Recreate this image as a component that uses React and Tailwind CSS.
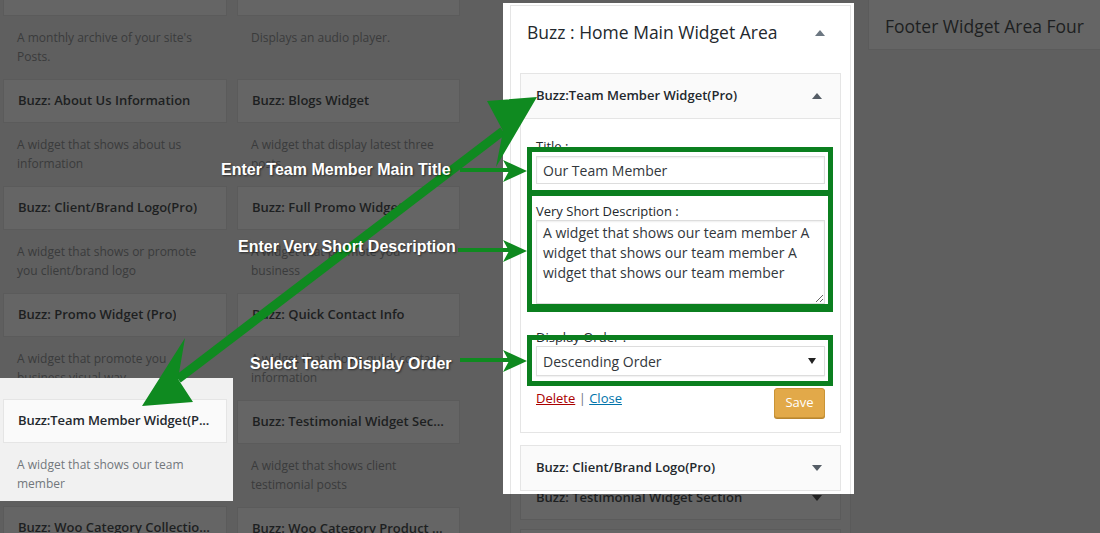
import React from "react";

const TriUp = ({ color = "#555d66" }) => (
  <svg width="10" height="6" viewBox="0 0 10 6">
    <polygon points="0,6 5,0 10,6" fill={color} />
  </svg>
);

const TriDown = ({ color = "#555d66" }) => (
  <svg width="10" height="6" viewBox="0 0 10 6">
    <polygon points="0,0 10,0 5,6" fill={color} />
  </svg>
);

const DimRow = ({ title, desc, h = "h-[63px]" }) => (
  <div>
    <div className="h-[44px] border border-[#5b5b5b] bg-[#656565] flex items-center px-[14px]">
      <div className="truncate text-[13px] font-semibold text-[#1d1f21]">{title}</div>
    </div>
    <div className={`${h} overflow-hidden px-[14px] pt-[12px] text-[12px] leading-[19px] text-[#3a3b3c]`}>
      {desc}
    </div>
  </div>
);

const colOne = [
  { title: "Archives", desc: "A monthly archive of your site's Posts." },
  { title: "Buzz: About Us Information", desc: "A widget that shows about us information" },
  { title: "Buzz: Client/Brand Logo(Pro)", desc: "A widget that shows or promote you client/brand logo" },
];

const colTwo = [
  { title: "Audio", desc: "Displays an audio player." },
  { title: "Buzz: Blogs Widget", desc: "A widget that display latest three posts" },
  { title: "Buzz: Full Promo Widget", desc: "A widget that promote you business" },
  { title: "Buzz: Quick Contact Info", desc: "A widget that shows quick contact information" },
  { title: "Buzz: Testimonial Widget Section", desc: "A widget that shows client testimonial posts" },
  { title: "Buzz: Woo Category Product Widget", desc: "" },
];

const Note = ({ className, children }) => (
  <div
    className={`absolute font-['Liberation_Sans',Arial,sans-serif] font-bold text-[16px] leading-[20px] text-white whitespace-nowrap [text-shadow:1px_1px_2px_rgba(0,0,0,0.55)] ${className}`}
  >
    {children}
  </div>
);

const App = () => {
  return (
    <div className="relative w-[1100px] h-[533px] overflow-hidden bg-[#5f5f5f] font-['Open_Sans',sans-serif]">
      <div className="flex items-start">
        {/* available widgets */}
        <div className="shrink-0 flex gap-[10px] pl-[3px] mt-[-28px]">
          <div className="w-[224px] flex flex-col">
            {colOne.map((w) => (
              <DimRow key={w.title} title={w.title} desc={w.desc} />
            ))}
            <DimRow title="Buzz: Promo Widget (Pro)" desc="A widget that promote you business visual way" h="h-[41px]" />
            <div className="-ml-[3px] w-[233px] pl-[3px] pr-[6px] pt-[21px] bg-[#f1f1f1]">
              <div className="h-[44px] border border-[#e5e5e5] bg-[#fafafa] flex items-center px-[14px]">
                <div className="whitespace-nowrap text-[13px] font-semibold tracking-[-0.1px] text-[#23282d]">Buzz:Team Member Widget(P...</div>
              </div>
              <div className="h-[58px] px-[14px] pt-[12px] text-[12px] leading-[19px] text-[#72777c]">
                A widget that shows our team member
              </div>
            </div>
            <div className="mt-[5px]">
              <DimRow title="Buzz: Woo Category Collection Widget" desc="" />
            </div>
          </div>
          <div className="w-[223px] flex flex-col">
            {colTwo.map((w) => (
              <DimRow key={w.title} title={w.title} desc={w.desc} />
            ))}
          </div>
        </div>

        {/* sidebar: home main widget area */}
        <div className="shrink-0 ml-[43px] w-[351px] flex flex-col">
          <div className="mt-[3px] h-[491px] overflow-hidden bg-white pl-[7px] pr-[3px] pt-[2px]">
            <div className="border border-[#e5e5e5] h-[600px]">
              <div className="h-[53px] flex items-center justify-between pl-[16px] pr-[25px]">
                <span className="text-[17.5px] text-[#23282d]">Buzz : Home Main Widget Area</span>
                <TriUp color="#6c7781" />
              </div>
              <div className="px-[9px] mt-[14px] flex flex-col">
                <div className="border border-[#e5e5e5]">
                  <div className="h-[45px] border-b border-[#e5e5e5] bg-[#fafafa] flex items-center justify-between pl-[15px] pr-[18px]">
                    <span className="text-[13px] font-semibold text-[#23282d]">Buzz:Team Member Widget(Pro)</span>
                    <TriUp />
                  </div>
                  <div className="px-[15px] pt-[18px] pb-[14px] flex flex-col">
                    <label className="text-[13px] leading-[18px] text-[#23282d]">Title :</label>
                    <input
                      readOnly
                      value="Our Team Member"
                      className="mt-[1px] h-[28px] w-full border border-[#dddddd] px-[6px] text-[14px] text-[#32373c] shadow-[inset_0_1px_2px_rgba(0,0,0,0.07)] outline-none"
                    />
                    <label className="mt-[18px] text-[13px] leading-[18px] text-[#23282d]">Very Short Description :</label>
                    <textarea
                      readOnly
                      defaultValue="A widget that shows our team member A widget that shows our team member A widget that shows our team member"
                      className="h-[84px] w-full border border-[#dddddd] px-[6px] pt-[2px] text-[14px] leading-[20px] text-[#32373c] shadow-[inset_0_1px_2px_rgba(0,0,0,0.07)] outline-none"
                    />
                    <label className="mt-[24px] text-[13px] leading-[18px] text-[#23282d]">Display Order :</label>
                    <div className="h-[30px] border border-[#dddddd] flex items-center justify-between pl-[6px] pr-[8px] shadow-[0_1px_1px_rgba(0,0,0,0.05)]">
                      <span className="text-[14px] text-[#32373c]">Descending Order</span>
                      <svg width="8" height="6" viewBox="0 0 8 6">
                        <polygon points="0,0 8,0 4,6" fill="#222" />
                      </svg>
                    </div>
                    <div className="mt-[12px] flex items-start justify-between">
                      <div className="text-[13px] leading-[20px]">
                        <span className="text-[#a00] underline">Delete</span>
                        <span className="text-[#72777c]"> | </span>
                        <span className="text-[#0073aa] underline">Close</span>
                      </div>
                      <button className="h-[30px] w-[51px] rounded-[3px] border border-[#c99436] bg-[#e2a949] text-[13px] text-white shadow-[0_1px_0_#b88530]">
                        Save
                      </button>
                    </div>
                  </div>
                </div>
                <div className="mt-[12px] h-[46px] border border-[#e5e5e5] bg-[#fafafa] flex items-center justify-between pl-[15px] pr-[18px]">
                  <span className="text-[13px] font-semibold text-[#23282d]">Buzz: Client/Brand Logo(Pro)</span>
                  <TriDown />
                </div>
              </div>
            </div>
          </div>
          <div className="h-[39px] overflow-hidden pl-[7px] pr-[3px]">
            <div className="h-[80px] border-x border-[#5a5a5a] bg-[#626262] px-[9px] flex flex-col">
              <div className="mt-[-19px] h-[46px] border border-[#5b5b5b] bg-[#656565] flex items-center justify-between pl-[15px] pr-[18px]">
                <span className="text-[13px] font-semibold text-[#1d1f21]">Buzz: Testimonial Widget Section</span>
                <TriDown color="#222" />
              </div>
              <div className="mt-[9px] h-[46px] border border-[#5b5b5b] bg-[#656565]" />
            </div>
          </div>
        </div>

        {/* footer widget area */}
        <div className="shrink-0 ml-[14px] mt-[-5px] h-[55px] w-[260px] border border-[#5b5b5b] bg-[#656565] flex items-center pt-[7px] pl-[16px]">
          <span className="text-[17.5px] text-[#1d1f21]">Footer Widget Area Four</span>
        </div>
      </div>

      {/* annotation frames */}
      <div className="absolute left-[527px] top-[147px] w-[306px] h-[48px] border-[5px] border-[#0b7f1f]" />
      <div className="absolute left-[527px] top-[191px] w-[306px] h-[121px] border-[5px] border-b-[8px] border-[#0b7f1f]" />
      <div className="absolute left-[527px] top-[335px] w-[306px] h-[51px] border-[5px] border-[#0b7f1f]" />

      {/* annotation arrows */}
      <svg className="absolute left-0 top-0 pointer-events-none" width="1100" height="533" viewBox="0 0 1100 533">
        <g fill="#0f8a20" stroke="#0f8a20">
          <line x1="178" y1="379" x2="503" y2="131" strokeWidth="9" />
          <polygon points="537,97 487,101 503,131 496,167" stroke="none" />
          <polygon points="142,406 185,338 178,379 193,402" stroke="none" />
          <line x1="460" y1="170" x2="510" y2="170" strokeWidth="4" />
          <polygon points="527,171 503,160 509,171 503,182" stroke="none" />
          <line x1="458" y1="250" x2="510" y2="250" strokeWidth="4" />
          <polygon points="527,251 503,240 509,251 503,262" stroke="none" />
          <line x1="460" y1="360" x2="510" y2="360" strokeWidth="4" />
          <polygon points="527,361 503,350 509,361 503,372" stroke="none" />
        </g>
      </svg>

      <Note className="left-[221px] top-[160px]">Enter Team Member Main Title</Note>
      <Note className="left-[238px] top-[237px]">Enter Very Short Description</Note>
      <Note className="left-[250px] top-[354px]">Select Team Display Order</Note>
    </div>
  );
};

export default App;
